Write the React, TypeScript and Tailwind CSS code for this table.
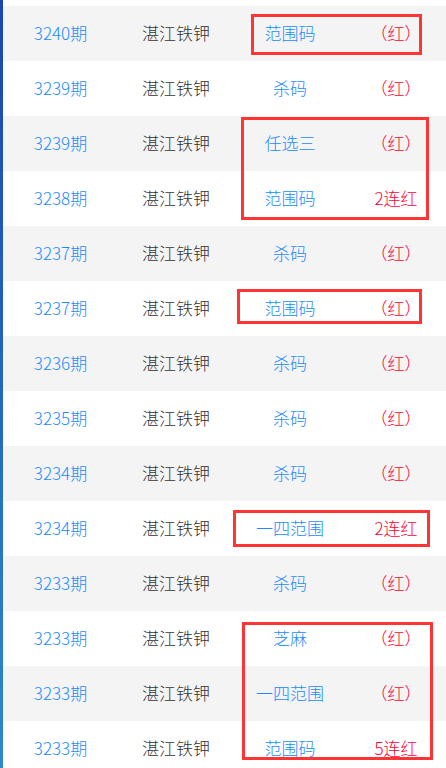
const rows = [
  { no: "3240期", type: "范围码", res: "（红）" },
  { no: "3239期", type: "杀码", res: "（红）" },
  { no: "3239期", type: "任选三", res: "（红）" },
  { no: "3238期", type: "范围码", res: "2连红" },
  { no: "3237期", type: "杀码", res: "（红）" },
  { no: "3237期", type: "范围码", res: "（红）" },
  { no: "3236期", type: "杀码", res: "（红）" },
  { no: "3235期", type: "杀码", res: "（红）" },
  { no: "3234期", type: "杀码", res: "（红）" },
  { no: "3234期", type: "一四范围", res: "2连红" },
  { no: "3233期", type: "杀码", res: "（红）" },
  { no: "3233期", type: "芝麻", res: "（红）" },
  { no: "3233期", type: "一四范围", res: "（红）" },
  { no: "3233期", type: "范围码", res: "5连红" },
];

// red highlight boxes drawn over the list
const boxes = [
  "left-[251px] top-[14px] w-[171px] h-[41px]",
  "left-[241px] top-[117px] w-[188px] h-[103px]",
  "left-[237px] top-[289px] w-[185px] h-[35px]",
  "left-[233px] top-[510px] w-[197px] h-[37px]",
  "left-[242px] top-[622px] w-[191px] h-[138px]",
];

export default function App() {
  return (
    <div
      className="relative flex h-[768px] overflow-hidden bg-white"
      style={{ fontFamily: '"Noto Sans CJK SC", "Microsoft YaHei", sans-serif' }}
    >
      <div className="w-[3px] shrink-0 bg-linear-to-b from-[#1c45b3] to-[#3088cc]" />
      <div className="flex-1 pt-[6px]">
        {rows.map((r, i) => (
          <div
            key={i}
            className={`grid h-[55px] grid-cols-[115px_116px_112px_1fr] items-center pb-[2px] text-[17px] font-light leading-none ${
              i % 2 === 0 ? "bg-[#f4f4f4]" : "bg-white"
            }`}
          >
            <span className="text-center text-[#1a8cff]">{r.no}</span>
            <span className="text-center text-[#333]">湛江铁钾</span>
            <span className="text-center text-[#1a8cff]">{r.type}</span>
            <span className="text-center text-[#ff0033]">{r.res}</span>
          </div>
        ))}
      </div>
      {boxes.map((b, i) => (
        <div key={i} className={`pointer-events-none absolute border-[3px] border-[#ff3535] ${b}`} />
      ))}
    </div>
  );
}
